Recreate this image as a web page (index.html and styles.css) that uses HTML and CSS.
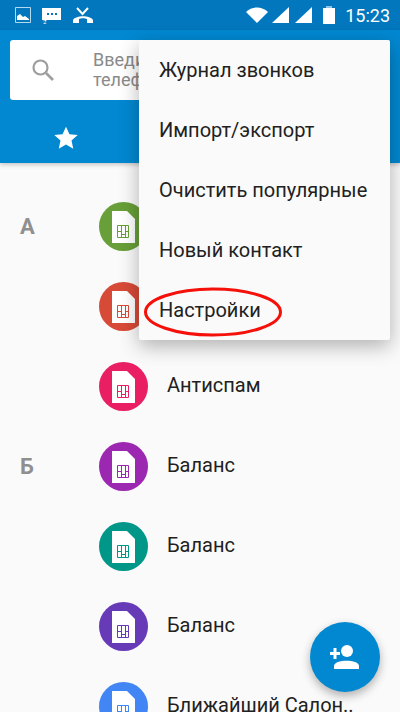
FILE: index.html
```html
<!DOCTYPE html>
<html lang="en">
<head>
    <meta charset="UTF-8">
    <meta name="viewport" content="width=device-width, initial-scale=1.0">
    <title>Контакты</title>
    <link rel="stylesheet" href="styles.css">
</head>
<body>
    <svg class="defs" width="0" height="0">
        <symbol id="sim" viewBox="0 0 49 49">
            <path d="M13 9h15l8 8v24H13z" fill="#fff"/>
            <path d="M18.5 23.5h11v12h-11zM22.5 23.5v12M26.5 23.5v12M18.5 29.5h4M26.5 29.5h3M22.5 32.5h4" fill="none" stroke="currentColor" stroke-width="1"/>
        </symbol>
    </svg>

    <div class="phone">
        <!-- Status bar -->
        <div class="status-bar">
            <div class="status-left">
                <svg width="16" height="16" viewBox="0 0 16 16"><path d="M.5.5h15v15H.5z" fill="none" stroke="#b3d9ee"/><path d="M2 13V9l3-2 3 3 2-1 4 3v1z" fill="#fff"/></svg>
                <svg width="20" height="18" viewBox="0 0 20 18"><path d="M0 2h19v12H5l-2 1v-1H0z" fill="#fff"/><path d="M5 7h2v2H5zM9 7h2v2H9zM13 7h2v2h-2z" fill="#0277bd"/><text x="1" y="18" class="tiny">2</text></svg>
                <svg width="20" height="17" viewBox="0 0 20 17"><path d="M4 1l5.5 6L15 1" fill="none" stroke="#fff" stroke-width="2"/><path d="M0 13c3-5 17-5 20 0v3h-6v-4c-2-1-6-1-8 0v4H0z" fill="#fff"/></svg>
            </div>
            <div class="status-right">
                <svg class="wifi" width="22" height="16" viewBox="0 0 22 16"><path d="M0 5c6-6 16-6 22 0L11 16z" fill="#fff"/></svg>
                <svg width="17" height="16" viewBox="0 0 17 16"><path d="M17 0v16H0z" fill="#fff"/></svg>
                <svg width="17" height="16" viewBox="0 0 17 16"><path d="M17 0v16H0z" fill="#fff"/></svg>
                <svg class="battery" width="12" height="18" viewBox="0 0 12 18"><path d="M3 0h6v2H3z" fill="#8ec5e4"/><path d="M0 2h12v16H0z" fill="#fff"/></svg>
                <span class="clock">15:23</span>
            </div>
        </div>

        <!-- Search and tabs -->
        <header class="app-header">
            <div class="search-box">
                <svg class="search-icon" width="24" height="24" viewBox="0 0 24 24"><circle cx="8.5" cy="9.5" r="7" fill="none" stroke="#9e9e9e" stroke-width="2.2"/><path d="M14 15l7 7" stroke="#9e9e9e" stroke-width="2.6"/></svg>
                <p class="search-hint">Введите имя или номер телефона</p>
            </div>
            <div class="tabs">
                <svg class="star" width="26" height="26" viewBox="0 0 24 24"><path d="M12 1.5l3.2 7 7.6.8-5.7 5.1 1.6 7.5L12 18.1l-6.7 3.8 1.6-7.5-5.7-5.1 7.6-.8z" fill="#fff"/></svg>
            </div>
        </header>

        <!-- Contact list -->
        <ul class="contact-list">
            <li class="contact"><span class="letter">А</span><svg class="avatar green"><use href="#sim"/></svg></li>
            <li class="contact"><span class="letter"></span><svg class="avatar red"><use href="#sim"/></svg></li>
            <li class="contact"><span class="letter"></span><svg class="avatar pink"><use href="#sim"/></svg><span class="name">Антиспам</span></li>
            <li class="contact"><span class="letter">Б</span><svg class="avatar purple"><use href="#sim"/></svg><span class="name">Баланс</span></li>
            <li class="contact"><span class="letter"></span><svg class="avatar teal"><use href="#sim"/></svg><span class="name">Баланс</span></li>
            <li class="contact"><span class="letter"></span><svg class="avatar indigo"><use href="#sim"/></svg><span class="name">Баланс</span></li>
            <li class="contact"><span class="letter"></span><svg class="avatar blue"><use href="#sim"/></svg><span class="name">Ближайший Салон..</span></li>
        </ul>

        <!-- Overflow menu -->
        <div class="menu">
            <div class="menu-item">Журнал звонков</div>
            <div class="menu-item">Импорт/экспорт</div>
            <div class="menu-item">Очистить популярные</div>
            <div class="menu-item">Новый контакт</div>
            <div class="menu-item">Настройки</div>
        </div>

        <!-- Hand-drawn mark around the settings item -->
        <svg class="mark" width="142" height="54" viewBox="0 0 142 54"><ellipse cx="71" cy="27" rx="67.5" ry="23" fill="none" stroke="#f5100a" stroke-width="3"/></svg>

        <button class="fab">
            <svg width="32" height="26" viewBox="0 0 32 26"><circle cx="18" cy="7" r="6" fill="#fff"/><path d="M5 25v-3c0-7 25-7 25 0v3z" fill="#fff"/><path d="M1 8h3.500V4h3v4H11v3H7.500v4h-3v-4H1z" fill="#fff"/></svg>
        </button>
    </div>
</body>
</html>
```

FILE: styles.css
```css
* {
    box-sizing: border-box;
}

body {
    margin: 0;
    font-family: Roboto, "Noto Sans", sans-serif;
    background-color: #fafafa;
}

.defs {
    display: block;
    height: 0;
}

.phone {
    position: relative;
    width: 400px;
    height: 712px;
    overflow: hidden;
    background-color: #fafafa;
}

.status-bar {
    display: flex;
    justify-content: space-between;
    align-items: center;
    height: 30px;
    padding: 0 10px 0 15px;
    background-color: #0277bd;
}

.status-left {
    display: flex;
    align-items: center;
    gap: 11px;
}

.status-right {
    display: flex;
    align-items: center;
    gap: 6px;
}

.wifi {
    margin-right: -2px;
}

.battery {
    margin-left: 5px;
}

.clock {
    margin-left: 4px;
    color: #fff;
    font-size: 18px;
}

.tiny {
    font-size: 6px;
    fill: #fff;
}

.app-header {
    height: 133px;
    padding: 10px 10px 0;
    background-color: #0288d1;
    box-shadow: 0 2px 4px rgba(0, 0, 0, 0.2);
}

.search-box {
    display: flex;
    align-items: center;
    height: 60px;
    padding-left: 22px;
    background-color: #fff;
    border-radius: 3px;
}

.search-icon {
    flex-shrink: 0;
}

.search-hint {
    width: 210px;
    margin: 0 0 0 37px;
    color: #8a8a8a;
    font-size: 18px;
    line-height: 20px;
}

.tabs {
    display: flex;
    justify-content: flex-start;
    padding: 25px 0 0 43px;
}

.contact-list {
    margin: 0;
    padding: 23px 0 0;
    list-style: none;
}

.contact {
    display: flex;
    align-items: center;
    height: 80px;
    padding-left: 20px;
}

.letter {
    width: 79px;
    color: #8f8f8f;
    font-size: 22px;
    font-weight: 700;
}

.avatar {
    flex-shrink: 0;
    width: 49px;
    height: 49px;
    border-radius: 50%;
}

.green { background-color: #689f38; color: #689f38; }
.red { background-color: #d84a38; color: #d84a38; }
.pink { background-color: #e91e63; color: #e91e63; }
.purple { background-color: #9c27b0; color: #9c27b0; }
.teal { background-color: #009688; color: #009688; }
.indigo { background-color: #673ab7; color: #673ab7; }
.blue { background-color: #4285f4; color: #4285f4; }

.name {
    margin: 0 0 3px 19px;
    color: #212121;
    font-size: 20px;
}

.menu {
    position: absolute;
    top: 40px;
    left: 139px;
    width: 251px;
    height: 300px;
    background-color: #fafafa;
    border-radius: 2px;
    box-shadow: 0 6px 20px rgba(0, 0, 0, 0.3);
}

.menu-item {
    display: flex;
    align-items: center;
    height: 60px;
    padding-left: 20px;
    color: #212121;
    font-size: 20px;
}

.mark {
    position: absolute;
    top: 285px;
    left: 142px;
}

.fab {
    position: absolute;
    top: 622px;
    left: 310px;
    display: flex;
    justify-content: center;
    align-items: center;
    width: 70px;
    height: 70px;
    padding: 0;
    border: none;
    border-radius: 50%;
    background-color: #0288d1;
    box-shadow: 0 4px 10px rgba(0, 0, 0, 0.3);
}
```
